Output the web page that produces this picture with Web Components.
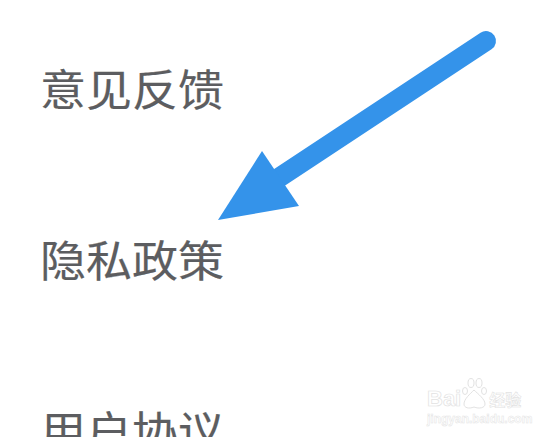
<!DOCTYPE html>
<html lang="zh">
<head>
<meta charset="utf-8">
<style>
  html, body { margin: 0; background: #fff; }
  body { width: 557px; height: 437px; overflow: hidden; position: relative; }
</style>
</head>
<body>
<setting-list>
  <setting-row>意见反馈</setting-row>
  <setting-row>隐私政策</setting-row>
  <setting-row>用户协议</setting-row>
</setting-list>
<arrow-mark></arrow-mark>
<baidu-mark></baidu-mark>

<script>
// LIST OF ROWS
customElements.define("setting-list", class extends HTMLElement {
  connectedCallback() {
    this.attachShadow({ mode: "open" }).innerHTML = `
      <style>
        :host { display: flex; flex-direction: column; gap: 113px; padding: 58px 0 0 40px; height: 437px; box-sizing: border-box; overflow: hidden; }
      </style>
      <slot></slot>`;
  }
});

// ONE ROW OF TEXT (THE SCREENSHOT IS A LITTLE SQUASHED, SO THE GLYPHS ARE TOO)
customElements.define("setting-row", class extends HTMLElement {
  connectedCallback() {
    this.attachShadow({ mode: "open" }).innerHTML = `
      <style>
        :host { display: block; flex: none; height: 58px; font: 46px/58px "Noto Sans CJK SC", "Noto Sans", sans-serif; color: #5c5d60; white-space: nowrap; -webkit-text-stroke: 0.2px #5c5d60; transform: scaleY(.93); transform-origin: 0 50%; }
      </style>
      <slot></slot>`;
  }
});

// BLUE ARROW, LIES OVER THE LIST
customElements.define("arrow-mark", class extends HTMLElement {
  connectedCallback() {
    this.attachShadow({ mode: "open" }).innerHTML = `
      <style>
        :host { display: block; position: absolute; left: 0; top: 0; width: 557px; height: 437px; pointer-events: none; }
        svg { display: block; }
      </style>
      <svg width="557" height="437" viewBox="0 0 557 437">
        <path d="M486 41 L280 177" stroke="#3493ea" stroke-width="20" stroke-linecap="round" fill="none"/>
        <path d="M218 220 L262 151 L299 206 Z" fill="#3493ea"/>
      </svg>`;
  }
});

// FAINT WATERMARK IN THE CORNER
customElements.define("baidu-mark", class extends HTMLElement {
  connectedCallback() {
    this.attachShadow({ mode: "open" }).innerHTML = `
      <style>
        :host { display: flex; flex-direction: column; align-items: flex-start; position: absolute; left: 427px; top: 374px; width: 104px; color: #fff; font-family: "Liberation Sans", sans-serif; }
        .top { display: flex; align-items: flex-end; height: 36px; }
        .bai { font-size: 22px; line-height: 22px; font-weight: 700; -webkit-text-stroke: .7px #e2e2e2; }
        .cn { font: 700 16px/21px "Noto Sans CJK SC", sans-serif; -webkit-text-stroke: .6px #e2e2e2; margin-left: 2px; white-space: nowrap; }
        .url { font-size: 12px; line-height: 14px; font-weight: 700; -webkit-text-stroke: .5px #e4e4e4; margin-top: 2px; white-space: nowrap; }
        svg { display: block; flex: none; }
      </style>
      <div class="top">
        <span class="bai">Bai</span>
        <svg width="26" height="36" viewBox="0 0 26 36">
          <g fill="#fff" stroke="#e2e2e2" stroke-width="1">
            <ellipse cx="4" cy="17" rx="2.5" ry="3.5"/>
            <ellipse cx="10" cy="9" rx="3" ry="4.5"/>
            <ellipse cx="18" cy="9" rx="3" ry="4.5"/>
            <ellipse cx="23" cy="17" rx="2.5" ry="3.5"/>
            <path d="M13 16 C9 20 3 25 3 30 C3 34 8 35 13 33 C18 35 24 34 24 30 C24 25 17 20 13 16 Z"/>
          </g>
        </svg>
        <span class="cn">经验</span>
      </div>
      <div class="url">jingyan.baidu.com</div>`;
  }
});
</script>
</body>
</html>
